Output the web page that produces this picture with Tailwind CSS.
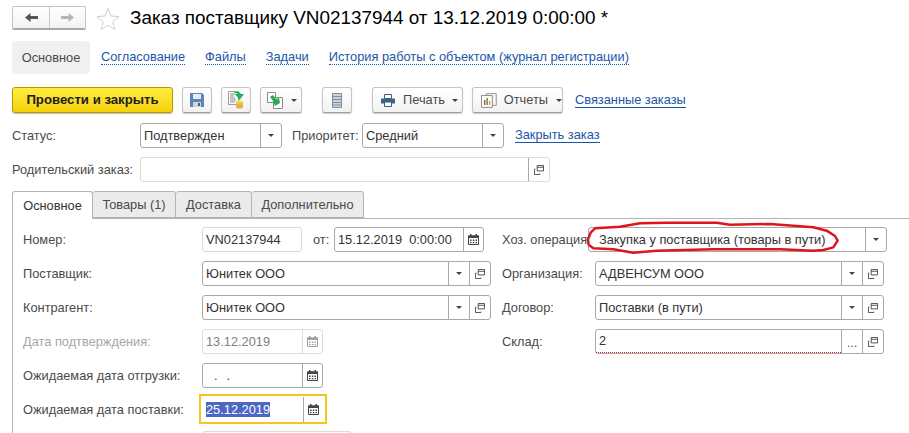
<!DOCTYPE html>
<html lang="ru">

<head>
  <meta charset="UTF-8">
  <title>Заказ поставщику</title>
  <script src="https://cdn.jsdelivr.net/npm/@tailwindcss/browser@4"></script>
</head>

<body class="bg-white overflow-hidden font-['Liberation_Sans',Arial,sans-serif] text-[12.8px] text-[#4a4a4a]">
  <!-- shared icons -->
  <svg class="hidden">
    <defs>
      <symbol id="open" viewBox="0 0 11 11">
        <path d="M3.500 .5h7v6h-7z M3.500 2.500h7" fill="none" stroke="#444" />
        <path d="M1.500 4.500h-1v6h6v-1" fill="none" stroke="#444" />
      </symbol>
      <symbol id="cal" viewBox="0 0 11 11">
        <path d="M.5 2h10v8.500H.5z" fill="#fff" stroke="currentColor" />
        <path d="M0 1.500h11V4H0zM2 0h1.500v2H2zM7.500 0H9v2H7.500z" fill="currentColor" />
        <path d="M2 5.500h1.500V7H2zM4.800 5.500h1.500V7H4.800zM7.500 5.500H9V7H7.500zM2 8h1.500v1.200H2zM4.800 8h1.500v1.200H4.800zM7.500 8H9v1.200H7.500z" fill="currentColor" />
      </symbol>
    </defs>
  </svg>

  <div class="relative w-[909px] h-[433px] overflow-hidden pl-3 pt-[6px]">

    <!-- title row -->
    <div class="flex items-center h-6">
      <div class="flex w-[74px] h-6 border border-[#c4c4c4] border-b-2 border-b-[#a8a8a8] rounded-[2px] bg-gradient-to-b from-white to-[#f3f3f3]">
        <div class="w-[37px] flex items-center justify-center border-r border-[#c8c8c8]">
          <svg width="15" height="11" viewBox="0 0 15 11"><path d="M6.500 1v3H14v3H6.500v3L1 5.500z" fill="#555" /></svg>
        </div>
        <div class="flex-1 flex items-center justify-center">
          <svg width="15" height="11" viewBox="0 0 15 11"><path d="M8.500 1v3H1v3h7.500v3L14 5.500z" fill="#b5b5b5" /></svg>
        </div>
      </div>
      <svg class="ml-[10px]" width="24" height="23" viewBox="0 0 24 23"><path d="M12 1.500l3 7.500 8 .6-6.200 5.100 2 7.800-6.800-4.300-6.800 4.300 2-7.800L1 9.600 9 9z" fill="#fff" stroke="#cfcfcf" /></svg>
      <h1 class="ml-[10px] text-[18.9px] leading-6 text-black">Заказ поставщику VN02137944 от 13.12.2019 0:00:00 *</h1>
    </div>

    <!-- section links -->
    <div class="flex items-center h-[33px] mt-[11px]">
      <div class="w-[78px] h-[33px] flex items-center justify-center bg-[#f0f0f0] rounded-[4px]">Основное</div>
      <a class="ml-[11px] text-[#1a56a8] border-b border-dotted border-[#1a56a8] leading-[14px]">Согласование</a>
      <a class="ml-[20px] text-[#1a56a8] border-b border-dotted border-[#1a56a8] leading-[14px]">Файлы</a>
      <a class="ml-[20px] text-[#1a56a8] border-b border-dotted border-[#1a56a8] leading-[14px]">Задачи</a>
      <a class="ml-[20px] text-[#1a56a8] border-b border-dotted border-[#1a56a8] leading-[14px]">История работы с объектом (журнал регистрации)</a>
    </div>

    <!-- toolbar -->
    <div class="flex items-center h-[26px] mt-[13px]">
      <button class="w-[161px] h-[26px] bg-gradient-to-b from-[#ffec3d] to-[#f5d200] border border-[#b49a00] rounded-[3px] font-bold text-[13.2px] text-[#1e1e1e] shadow-[0_1px_1px_rgba(0,0,0,.25)]">Провести и закрыть</button>
      <button class="ml-[9px] w-[30px] h-[26px] flex items-center justify-center border border-[#c4c4c4] border-b-[#a0a0a0] rounded-[3px] bg-gradient-to-b from-white to-[#f2f2f2] shadow-[0_1px_1px_rgba(0,0,0,.2)]">
        <svg width="14" height="14" viewBox="0 0 14 14"><path d="M0 0h12l2 2v12H0z" fill="#5b84b8" /><path d="M3 1h8v5H3z" fill="#e6edf5" /><path d="M3 9h8v5H3z" fill="#d0d4d8" /><path d="M8 10h2v3H8z" fill="#46648a" /></svg>
      </button>
      <button class="ml-[9px] w-[30px] h-[26px] flex items-center justify-center border border-[#c4c4c4] border-b-[#a0a0a0] rounded-[3px] bg-gradient-to-b from-white to-[#f2f2f2] shadow-[0_1px_1px_rgba(0,0,0,.2)]">
        <svg width="17" height="18" viewBox="0 0 17 18"><path d="M.5 .5h10v13H.5z" fill="#fff" stroke="#9a9a9a" /><path d="M2 3h5M2 5h4M2 7h5M2 9h6M2 11h5" stroke="#8a8a8a" /><path d="M8 11h7v5.500c0 1.500-7 1.500-7 0z" fill="#e0b93c" /><ellipse cx="11.500" cy="11" rx="3.500" ry="1.500" fill="#f0d468" /><path d="M5 1h6l2 2 3 0-4.500 6L7 3h3z" fill="#1fb158" /></svg>
      </button>
      <button class="ml-[9px] w-[42px] h-[26px] flex items-center pl-[6px] border border-[#c4c4c4] border-b-[#a0a0a0] rounded-[3px] bg-gradient-to-b from-white to-[#f2f2f2] shadow-[0_1px_1px_rgba(0,0,0,.2)]">
        <svg width="17" height="17" viewBox="0 0 17 17"><path d="M.5 .5h8v10h-8z" fill="#fff" stroke="#8a8a8a" /><path d="M6.500 5.500h9v11h-9z" fill="#fff" stroke="#8a8a8a" /><path d="M3 5l3-2 3 4 3-1 1 5-5 3-2-5z" fill="#27ae4f" /></svg>
        <span class="ml-[7px] border-x-[3px] border-t-[3px] border-x-transparent border-t-[#444]"></span>
      </button>
      <button class="ml-[20px] w-[30px] h-[26px] flex items-center justify-center border border-[#c4c4c4] border-b-[#a0a0a0] rounded-[3px] bg-gradient-to-b from-white to-[#f2f2f2] shadow-[0_1px_1px_rgba(0,0,0,.2)]">
        <svg width="10" height="15" viewBox="0 0 10 15"><path d="M.5 .5h9v14h-9z" fill="#c7d3de" stroke="#7e909f" /><path d="M0 3.500h10M0 6.500h10M0 9.500h10M0 12h10" stroke="#7e909f" /></svg>
      </button>
      <button class="ml-[20px] w-[91px] h-[26px] flex items-center pl-2 border border-[#c4c4c4] border-b-[#a0a0a0] rounded-[3px] bg-gradient-to-b from-white to-[#f2f2f2] shadow-[0_1px_1px_rgba(0,0,0,.2)]">
        <svg width="14" height="13" viewBox="0 0 14 13"><path d="M3.500 .5h7v4h-7z" fill="#fff" stroke="#3d5f80" /><path d="M0 4.500h14v5H0z" fill="#3d6488" /><path d="M3.500 8h7v4.500h-7z" fill="#fff" stroke="#3d5f80" /></svg>
        <span class="ml-2">Печать</span>
        <span class="ml-[7px] border-x-[3px] border-t-[3px] border-x-transparent border-t-[#444]"></span>
      </button>
      <button class="ml-[9px] w-[91px] h-[26px] flex items-center pl-2 border border-[#c4c4c4] border-b-[#a0a0a0] rounded-[3px] bg-gradient-to-b from-white to-[#f2f2f2] shadow-[0_1px_1px_rgba(0,0,0,.2)]">
        <svg width="16" height="15" viewBox="0 0 16 15"><path d="M5.500 .5h10v12h-10z" fill="#f4f4f4" stroke="#9a9a9a" /><path d="M.5 2.500h11v12H.5z" fill="#fff" stroke="#8a8a8a" /><path d="M3 7h1.500v5H3z" fill="#d9412f" /><path d="M5.500 5h1.500v7H5.500z" fill="#3da346" /><path d="M8 8h1.500v4H8z" fill="#d99a2b" /></svg>
        <span class="ml-[7px]">Отчеты</span>
        <span class="ml-[8px] border-x-[3px] border-t-[3px] border-x-transparent border-t-[#444]"></span>
      </button>
      <a class="ml-3 text-[#1a56a8] border-b border-[#1a56a8] leading-[14px]">Связанные заказы</a>
    </div>

    <!-- status row -->
    <div class="flex items-center h-[25px] mt-[10px]">
      <div class="w-[128px]">Статус:</div>
      <div class="flex w-[142px] h-[25px] border border-[#a9a9a9] rounded-[3px]">
        <div class="flex-1 pl-[3px] leading-[23px] text-[#333]">Подтвержден</div>
        <div class="w-[21px] flex items-center justify-center border-l border-[#a9a9a9]"><span class="border-x-[3px] border-t-[3px] border-x-transparent border-t-[#444]"></span></div>
      </div>
      <div class="ml-[10px] w-[70px]">Приоритет:</div>
      <div class="flex w-[142px] h-[25px] border border-[#a9a9a9] rounded-[3px]">
        <div class="flex-1 pl-[3px] leading-[23px] text-[#333]">Средний</div>
        <div class="w-[21px] flex items-center justify-center border-l border-[#a9a9a9]"><span class="border-x-[3px] border-t-[3px] border-x-transparent border-t-[#444]"></span></div>
      </div>
      <a class="ml-[11px] text-[#1a56a8] border-b border-[#1a56a8] leading-[14px]">Закрыть заказ</a>
    </div>

    <!-- parent order -->
    <div class="flex items-center h-[25px] mt-[9px]">
      <div class="w-[128px]">Родительский заказ:</div>
      <div class="flex w-[410px] h-[25px] border border-[#dcdcdc] rounded-[3px]">
        <div class="flex-1"></div>
        <div class="w-[21px] flex items-center justify-center border-l border-[#a9a9a9]"><svg class="w-[10px] h-[10px]"><use href="#open" /></svg></div>
      </div>
    </div>

    <!-- tabs -->
    <div class="flex h-[28px] mt-[9px] relative z-10">
      <div class="w-[81px] h-[28px] flex items-center justify-center bg-white border border-b-0 border-[#b4b4b4] rounded-t-[3px] text-[#333]">Основное</div>
      <div class="w-[83px] h-[27px] flex items-center justify-center bg-[#ebebeb] border border-l-0 border-[#b4b4b4] rounded-t-[3px]">Товары (1)</div>
      <div class="w-[76px] h-[27px] flex items-center justify-center bg-[#ebebeb] border border-l-0 border-[#b4b4b4] rounded-t-[3px]">Доставка</div>
      <div class="w-[112px] h-[27px] flex items-center justify-center bg-[#ebebeb] border border-l-0 border-[#b4b4b4] rounded-t-[3px]">Дополнительно</div>
    </div>

    <!-- tab panel -->
    <div class="flex -mt-px h-[300px] border-l border-t border-[#b4b4b4] pl-[10px] pt-[8px]">

      <!-- left column -->
      <div class="w-[468px] flex flex-col gap-[9px]">
        <div class="flex items-center h-[25px]">
          <div class="w-[179px]">Номер:</div>
          <div class="w-[100px] h-[25px] border border-[#dcdcdc] rounded-[3px] pl-[3px] leading-[23px] text-[#333]">VN02137944</div>
          <div class="ml-[11px] w-[21px]">от:</div>
          <div class="flex w-[150px] h-[25px] border border-[#a9a9a9] rounded-[3px]">
            <div class="flex-1 pl-[3px] leading-[23px] text-[#333] whitespace-pre">15.12.2019  0:00:00</div>
            <div class="w-[20px] flex items-center justify-center border-l border-[#a9a9a9] text-[#444]"><svg class="w-[11px] h-[11px]"><use href="#cal" /></svg></div>
          </div>
        </div>
        <div class="flex items-center h-[25px]">
          <div class="w-[179px]">Поставщик:</div>
          <div class="flex w-[289px] h-[25px] border border-[#a9a9a9] rounded-[3px]">
            <div class="flex-1 pl-[3px] leading-[23px] text-[#333]">Юнитек ООО</div>
            <div class="w-[21px] flex items-center justify-center border-l border-[#a9a9a9]"><span class="border-x-[3px] border-t-[3px] border-x-transparent border-t-[#444]"></span></div>
            <div class="w-[21px] flex items-center justify-center border-l border-[#a9a9a9]"><svg class="w-[10px] h-[10px]"><use href="#open" /></svg></div>
          </div>
        </div>
        <div class="flex items-center h-[25px]">
          <div class="w-[179px]">Контрагент:</div>
          <div class="flex w-[289px] h-[25px] border border-[#a9a9a9] rounded-[3px]">
            <div class="flex-1 pl-[3px] leading-[23px] text-[#333]">Юнитек ООО</div>
            <div class="w-[21px] flex items-center justify-center border-l border-[#a9a9a9]"><span class="border-x-[3px] border-t-[3px] border-x-transparent border-t-[#444]"></span></div>
            <div class="w-[21px] flex items-center justify-center border-l border-[#a9a9a9]"><svg class="w-[10px] h-[10px]"><use href="#open" /></svg></div>
          </div>
        </div>
        <div class="flex items-center h-[25px]">
          <div class="w-[179px] text-[#a6a6a6]">Дата подтверждения:</div>
          <div class="flex w-[121px] h-[25px] border border-[#dcdcdc] rounded-[3px]">
            <div class="flex-1 pl-[3px] leading-[23px] text-[#808080]">13.12.2019</div>
            <div class="w-[20px] flex items-center justify-center border-l border-[#dcdcdc] text-[#a0a0a0]"><svg class="w-[11px] h-[11px]"><use href="#cal" /></svg></div>
          </div>
        </div>
        <div class="flex items-center h-[25px]">
          <div class="w-[179px]">Ожидаемая дата отгрузки:</div>
          <div class="flex w-[121px] h-[25px] border border-[#a9a9a9] rounded-[3px]">
            <div class="flex-1 pl-[11px] leading-[23px] text-[#333]"><span>.</span><span class="ml-[9px]">.</span></div>
            <div class="w-[20px] flex items-center justify-center border-l border-[#a9a9a9] text-[#444]"><svg class="w-[11px] h-[11px]"><use href="#cal" /></svg></div>
          </div>
        </div>
        <div class="flex items-center h-[25px]">
          <div class="w-[179px]">Ожидаемая дата поставки:</div>
          <div class="relative flex w-[121px] h-[25px]">
            <div class="flex-1 pl-1 leading-[25px]"><span class="bg-[#4d66c4] text-white">25.12.2019</span></div>
            <div class="w-[20px] flex items-center justify-center border-l border-[#a9a9a9] text-[#444]"><svg class="w-[11px] h-[11px]"><use href="#cal" /></svg></div>
            <div class="absolute -left-[3px] -right-[4px] -top-[3px] -bottom-[2px] border-2 border-[#f7c61e]"></div>
          </div>
        </div>
        <div class="flex h-[25px] pl-[179px]">
          <div class="w-[150px] h-[25px] border border-[#dcdcdc] rounded-[3px]"></div>
        </div>
      </div>

      <!-- right column -->
      <div class="ml-[11px] w-[385px] flex flex-col gap-[9px]">
        <div class="flex items-center h-[25px]">
          <div class="w-[86px] whitespace-nowrap">Хоз. операция</div>
          <div class="flex w-[299px] h-[25px] border border-[#a9a9a9] rounded-[3px]">
            <div class="flex-1 pl-[10px] leading-[23px] text-[#333]">Закупка у поставщика (товары в пути)</div>
            <div class="w-[21px] flex items-center justify-center border-l border-[#a9a9a9]"><span class="border-x-[3px] border-t-[3px] border-x-transparent border-t-[#444]"></span></div>
          </div>
        </div>
        <div class="flex items-center h-[25px]">
          <div class="w-[93px]">Организация:</div>
          <div class="flex w-[289px] h-[25px] border border-[#a9a9a9] rounded-[3px]">
            <div class="flex-1 pl-[3px] leading-[23px] text-[#333]">АДВЕНСУМ ООО</div>
            <div class="w-[21px] flex items-center justify-center border-l border-[#a9a9a9]"><span class="border-x-[3px] border-t-[3px] border-x-transparent border-t-[#444]"></span></div>
            <div class="w-[21px] flex items-center justify-center border-l border-[#a9a9a9]"><svg class="w-[10px] h-[10px]"><use href="#open" /></svg></div>
          </div>
        </div>
        <div class="flex items-center h-[25px]">
          <div class="w-[93px]">Договор:</div>
          <div class="flex w-[289px] h-[25px] border border-[#a9a9a9] rounded-[3px]">
            <div class="flex-1 pl-[3px] leading-[23px] text-[#333]">Поставки (в пути)</div>
            <div class="w-[21px] flex items-center justify-center border-l border-[#a9a9a9]"><span class="border-x-[3px] border-t-[3px] border-x-transparent border-t-[#444]"></span></div>
            <div class="w-[21px] flex items-center justify-center border-l border-[#a9a9a9]"><svg class="w-[10px] h-[10px]"><use href="#open" /></svg></div>
          </div>
        </div>
        <div class="flex items-center h-[25px]">
          <div class="w-[93px]">Склад:</div>
          <div class="flex w-[289px] h-[25px] border border-[#a9a9a9] rounded-[3px]">
            <div class="flex-1 pl-[3px] leading-[22px] text-[#333] border-b border-dotted border-[#e01b1b]">2</div>
            <div class="w-[21px] flex items-center justify-center border-l border-[#a9a9a9] text-[#555] pt-[3px]">...</div>
            <div class="w-[21px] flex items-center justify-center border-l border-[#a9a9a9]"><svg class="w-[10px] h-[10px]"><use href="#open" /></svg></div>
          </div>
        </div>
      </div>
    </div>

    <!-- red hand-drawn mark over the operation field -->
    <svg class="absolute left-[480px] top-[210px]" width="429" height="150" viewBox="0 0 1287 450">
      <path d="M345 55L420 50 480 40 560 38 710 38 750 44 870 42 1000 52 1040 62 1065 78 1073 92 1060 112 1030 120 1000 122 900 118 700 118 530 122 460 128 400 118 340 115 326 104 324 88 332 68z" fill="none" stroke="#e0141e" stroke-width="7.500" stroke-linejoin="round" />
    </svg>
  </div>
</body>

</html>
